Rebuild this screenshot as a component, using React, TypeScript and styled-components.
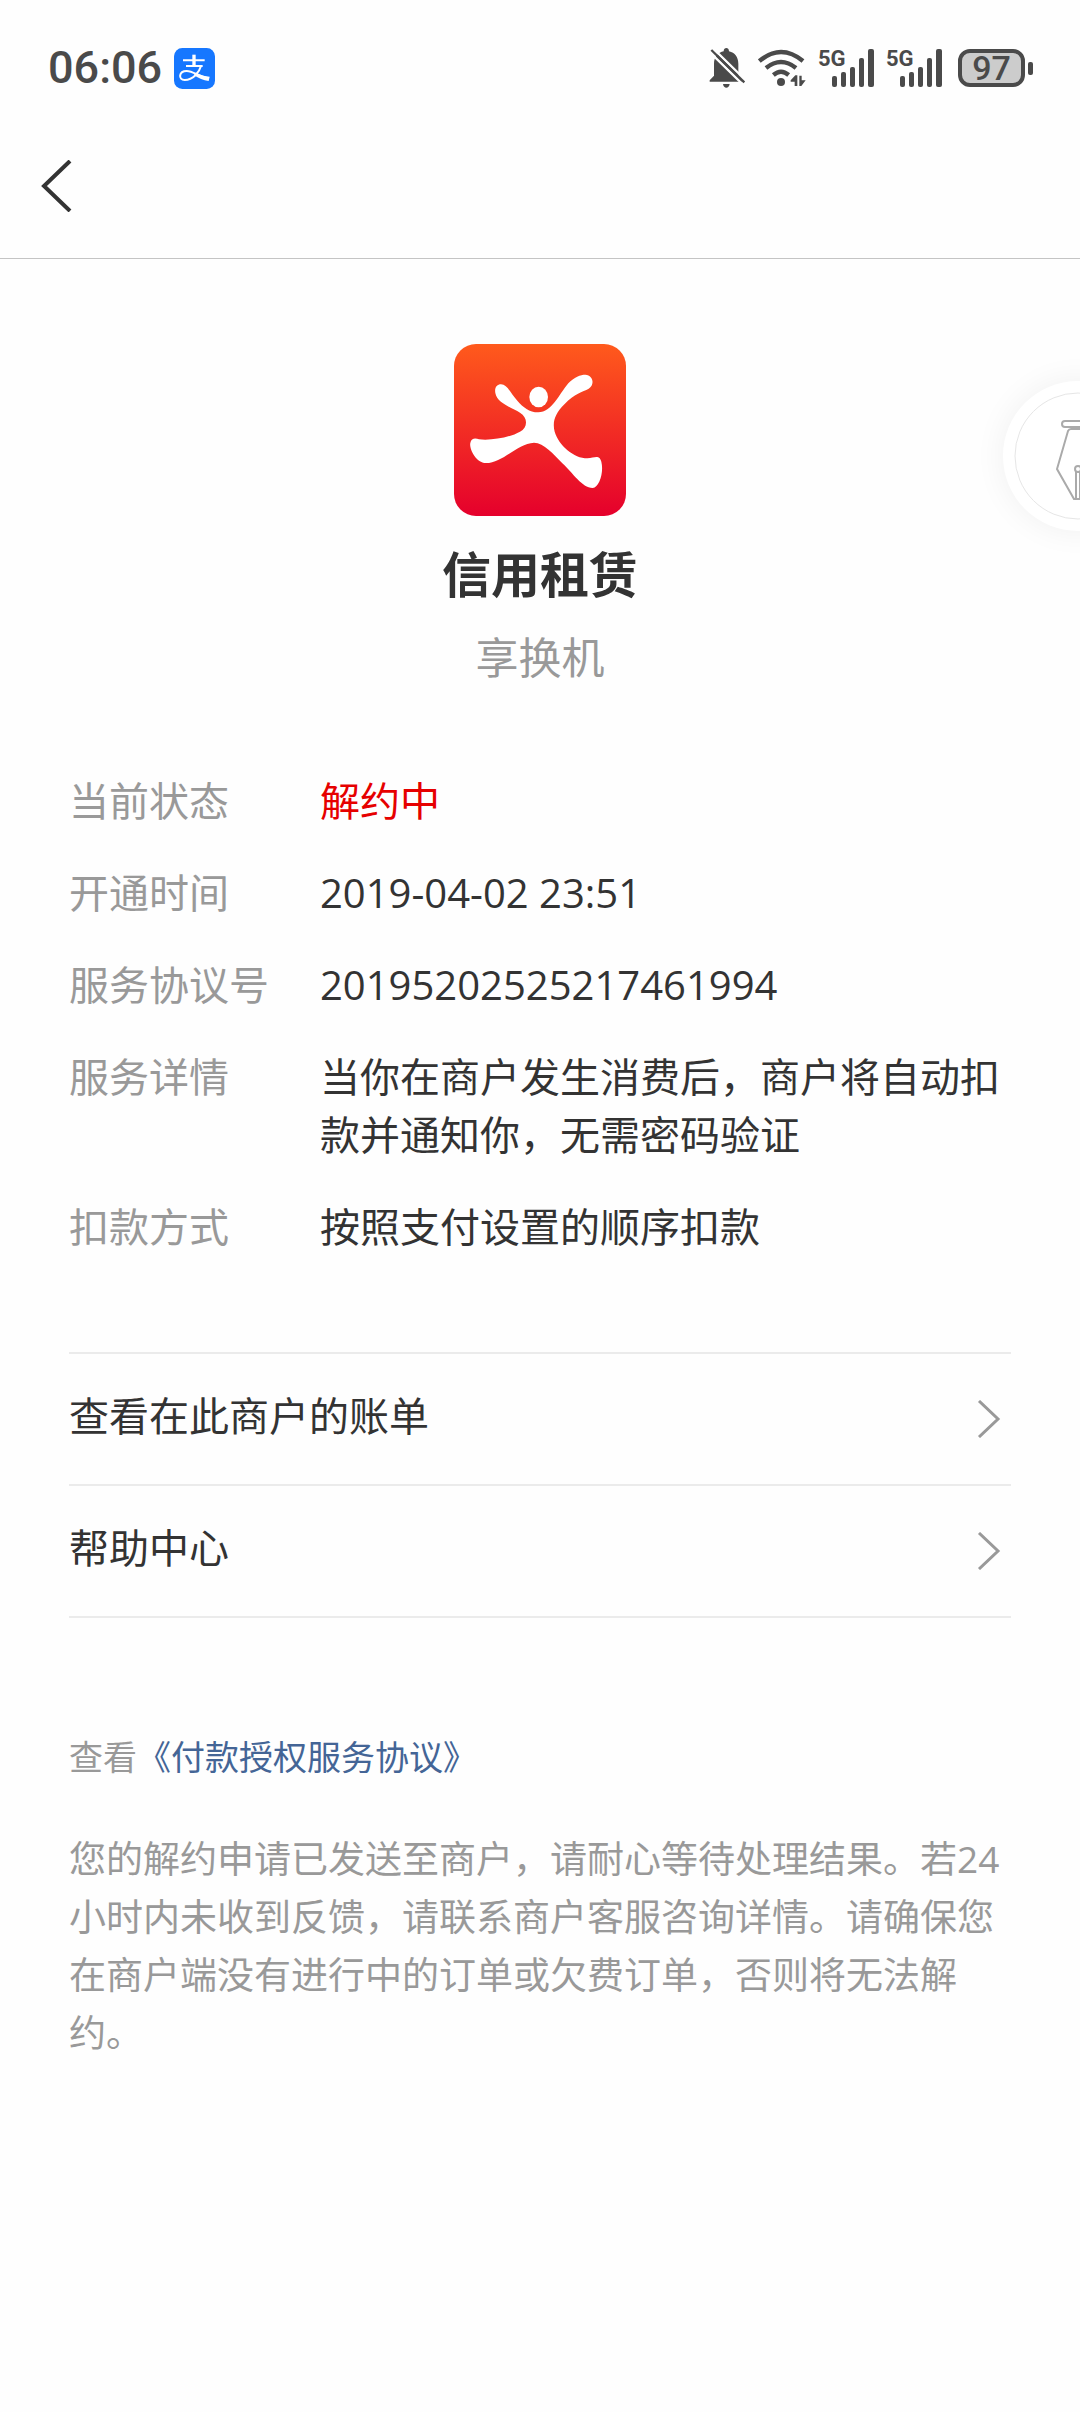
import React from 'react';
import styled, { createGlobalStyle } from 'styled-components';

const GlobalStyle = createGlobalStyle`
  *, *::before, *::after { box-sizing: border-box; }
  body {
    margin: 0;
    background: #fefefe;
    color: #333;
    font-family: 'Open Sans', 'Noto Sans CJK SC', sans-serif;
    font-size: 40px;
    line-height: 58px;
  }
`;

const Page = styled.div`
  position: relative;
  min-height: 100vh;
  overflow: hidden;
`;

const StatusBar = styled.div`
  display: flex;
  align-items: center;
  justify-content: space-between;
  padding: 44px 47px 22px 48px;
  color: #4a4a4a;
  font-family: Roboto, sans-serif;
  line-height: 48px;
`;

const StatusGroup = styled.div<{ $gap: number }>`
  display: flex;
  align-items: center;
  gap: ${({ $gap }) => $gap}px;
`;

const Clock = styled.time`
  font-size: 45px;
  font-weight: 500;
`;

const Battery = styled.div`
  display: flex;
  align-items: center;
  gap: 3px;
  margin-left: 4px;
`;

const BatteryBody = styled.span`
  display: flex;
  align-items: center;
  justify-content: center;
  width: 67px;
  height: 38px;
  border: 4px solid #4a4a4a;
  border-radius: 12px;
  background: #ccc;
  font-size: 34px;
  font-weight: 500;
`;

const BatteryTip = styled.span`
  width: 5px;
  height: 13px;
  border-radius: 2px;
  background: #4a4a4a;
`;

const NavBar = styled.header`
  display: flex;
  align-items: center;
  height: 145px;
  padding: 0 24px;
  border-bottom: 1px solid #c4c4c4;
`;

const BackButton = styled.button`
  display: flex;
  padding: 16px;
  border: 0;
  background: none;
`;

const Content = styled.main`
  padding: 85px 69px;
`;

const Merchant = styled.section`
  display: flex;
  flex-direction: column;
  align-items: center;
`;

const ServiceName = styled.h1`
  margin: 22px 0 18px;
  font-size: 49px;
  font-weight: 700;
  line-height: 72px;
`;

const MerchantName = styled.p`
  margin: 0;
  color: #999;
  font-size: 43px;
  line-height: 60px;
`;

const Details = styled.dl`
  display: grid;
  grid-template-columns: 201px 1fr;
  gap: 34px 50px;
  margin: 84px 0 96px;
`;

const Label = styled.dt`
  color: #999;
  white-space: nowrap;
`;

const Value = styled.dd<{ $alert?: boolean }>`
  margin: 0;
  color: ${({ $alert }) => ($alert ? '#e60000' : '#333')};
`;

const Menu = styled.nav`
  border-top: 2px solid #ebebeb;
`;

const MenuLink = styled.a`
  display: flex;
  align-items: center;
  justify-content: space-between;
  height: 132px;
  padding-right: 10px;
  border-bottom: 2px solid #ebebeb;
  color: #333;
  text-decoration: none;
`;

const MenuText = styled.span`
  padding-bottom: 6px;
`;

const Agreement = styled.p`
  margin: 110px 0 44px;
  color: #999;
  font-size: 34px;
`;

const AgreementLink = styled.a`
  color: #446596;
  text-decoration: none;
`;

const Notice = styled.p`
  margin: 0;
  color: #999;
  font-size: 37px;
`;

const FloatingButton = styled.button`
  position: absolute;
  top: 381px;
  right: -73px;
  display: flex;
  padding: 11px;
  border: 0;
  border-radius: 50%;
  background: #fff;
  box-shadow: 0 0 32px rgba(0, 0, 0, 0.06);
`;

const SignalSvg = styled.svg`
  overflow: visible;
`;

const AlipayIcon = () => (
  <svg width="41" height="41" viewBox="0 0 123 123" aria-hidden="true">
    <rect width="123" height="123" rx="25" fill="#1677ff" />
    <g fill="none" stroke="#fff">
      <path d="M27 37H92M36 54H86" strokeWidth="6" />
      <path d="M60 20V54" strokeWidth="10" />
      <path d="M81 54C76 72 58 96 32 96C12 96 14 69 38 69C58 69 78 88 105 91" strokeWidth="6" />
    </g>
    <path d="M63 75C80 80 92 86 107 86L104 99C88 98 74 90 60 82Z" fill="#fff" />
  </svg>
);

const MutedBellIcon = () => (
  <svg width="37" height="42" viewBox="60 54 111 126" aria-hidden="true">
    <path
      d="M62 158V154L75 140V104C75 84 88 70 104 67C104 54 120 54 120 67C138 71 148 85 148 104V140L160 158Z"
      fill="#4a4a4a"
    />
    <path d="M102 165H122C120 180 104 180 102 165Z" fill="#4a4a4a" />
    <path d="M62 69L162 167M72 58L172 156" stroke="#fefefe" strokeWidth="7" />
    <path d="M67 63L166 160" stroke="#4a4a4a" strokeWidth="7" />
  </svg>
);

const WifiIcon = () => (
  <svg width="48" height="38" viewBox="210 54 144 114" aria-hidden="true">
    <g fill="none" stroke="#4a4a4a" strokeWidth="13">
      <path d="M214 90Q279 36 345 90" />
      <path d="M234 111Q279 75 324 111" />
      <path d="M256 132Q279 112 302 132" />
    </g>
    <circle cx="279" cy="153" r="12" fill="#4a4a4a" />
    <path d="M308 148L322 133H328V165H320V152H308ZM334 134H341V148H353L340 165H334Z" fill="#4a4a4a" />
  </svg>
);

const SignalIcon = () => (
  <SignalSvg width="56" height="38" viewBox="0 0 56 38" fill="#4a4a4a" role="img">
    <text x="0" y="17" fontFamily="Roboto, sans-serif" fontSize="22" fontWeight="700">
      5G
    </text>
    <rect x="14" y="27" width="5" height="11" rx="2" />
    <rect x="23" y="23" width="5" height="15" rx="2" />
    <rect x="32" y="18" width="5" height="20" rx="2" />
    <rect x="41" y="9" width="5" height="29" rx="2" />
    <rect x="50" y="0" width="6" height="38" rx="2" />
  </SignalSvg>
);

const BackIcon = () => (
  <svg width="32" height="52" viewBox="0 0 32 52" fill="none" aria-hidden="true">
    <path d="M30 1L4 26L30 51" stroke="#333" strokeWidth="4" />
  </svg>
);

const ChevronIcon = () => (
  <svg width="24" height="38" viewBox="0 0 24 38" fill="none" aria-hidden="true">
    <path d="M2 1L21 19L2 37" stroke="#999" strokeWidth="3" />
  </svg>
);

const MerchantLogo = () => (
  <svg width="172" height="172" viewBox="0 0 516 516" role="img" aria-label="享换机">
    <defs>
      <linearGradient id="logoFill" x1="0" y1="0" x2="0" y2="1">
        <stop offset="0" stopColor="#ff5a1c" />
        <stop offset="1" stopColor="#e5002c" />
      </linearGradient>
    </defs>
    <rect width="516" height="516" rx="66" fill="url(#logoFill)" />
    <g fill="#fff">
      <ellipse cx="254" cy="159" rx="28" ry="31" />
      <path d="M141 121C160 121 171 150 190 170C208 190 225 205 253 205C294 205 314 152 343 118C360 99 380 92 394 92C418 94 423 122 404 134C386 144 361 149 332 180C301 210 295 236 302 263C314 304 360 343 400 343C423 341 436 331 442 353C450 385 436 431 416 432C384 432 356 386 325 358C298 330 270 297 240 296C190 299 145 357 96 357C65 357 45 312 49 297C52 281 65 282 75 286C112 290 166 281 198 263C222 252 222 220 198 206C172 190 130 178 124 147C121 130 129 121 141 121Z" />
    </g>
  </svg>
);

const PenIcon = () => (
  <svg width="128" height="128" viewBox="0 0 128 128" fill="none" aria-hidden="true">
    <circle cx="64" cy="64" r="63" stroke="#e6e6e6" />
    <g stroke="#aaa" strokeWidth="2">
      <rect x="48" y="29" width="34" height="6" rx="3" />
      <path d="M57 37H73Q75 37 76 39L87 77L70 107H60L43 77L54 39Q55 37 57 37Z" />
      <path d="M62 107V80M66 107V80" />
      <circle cx="64" cy="77" r="3" />
    </g>
  </svg>
);

const details = [
  { label: '当前状态', value: '解约中', alert: true },
  { label: '开通时间', value: '2019-04-02 23:51' },
  { label: '服务协议号', value: '20195202525217461994' },
  { label: '服务详情', value: '当你在商户发生消费后，商户将自动扣款并通知你，无需密码验证' },
  { label: '扣款方式', value: '按照支付设置的顺序扣款' },
];

const links = ['查看在此商户的账单', '帮助中心'];

export default function App() {
  return (
    <Page>
      <GlobalStyle />
      <StatusBar>
        <StatusGroup $gap={12}>
          <Clock>06:06</Clock>
          <AlipayIcon />
        </StatusGroup>
        <StatusGroup $gap={12}>
          <MutedBellIcon />
          <WifiIcon />
          <SignalIcon />
          <SignalIcon />
          <Battery>
            <BatteryBody>97</BatteryBody>
            <BatteryTip />
          </Battery>
        </StatusGroup>
      </StatusBar>
      <NavBar>
        <BackButton type="button" aria-label="返回">
          <BackIcon />
        </BackButton>
      </NavBar>
      <Content>
        <Merchant>
          <MerchantLogo />
          <ServiceName>信用租赁</ServiceName>
          <MerchantName>享换机</MerchantName>
        </Merchant>
        <Details>
          {details.map(({ label, value, alert }) => (
            <React.Fragment key={label}>
              <Label>{label}</Label>
              <Value $alert={alert}>{value}</Value>
            </React.Fragment>
          ))}
        </Details>
        <Menu>
          {links.map((text) => (
            <MenuLink key={text} href="#">
              <MenuText>{text}</MenuText>
              <ChevronIcon />
            </MenuLink>
          ))}
        </Menu>
        <Agreement>
          查看<AgreementLink href="#">《付款授权服务协议》</AgreementLink>
        </Agreement>
        <Notice>
          您的解约申请已发送至商户，请耐心等待处理结果。若24小时内未收到反馈，请联系商户客服咨询详情。请确保您在商户端没有进行中的订单或欠费订单，否则将无法解约。
        </Notice>
      </Content>
      <FloatingButton type="button" aria-label="编辑">
        <PenIcon />
      </FloatingButton>
    </Page>
  );
}
